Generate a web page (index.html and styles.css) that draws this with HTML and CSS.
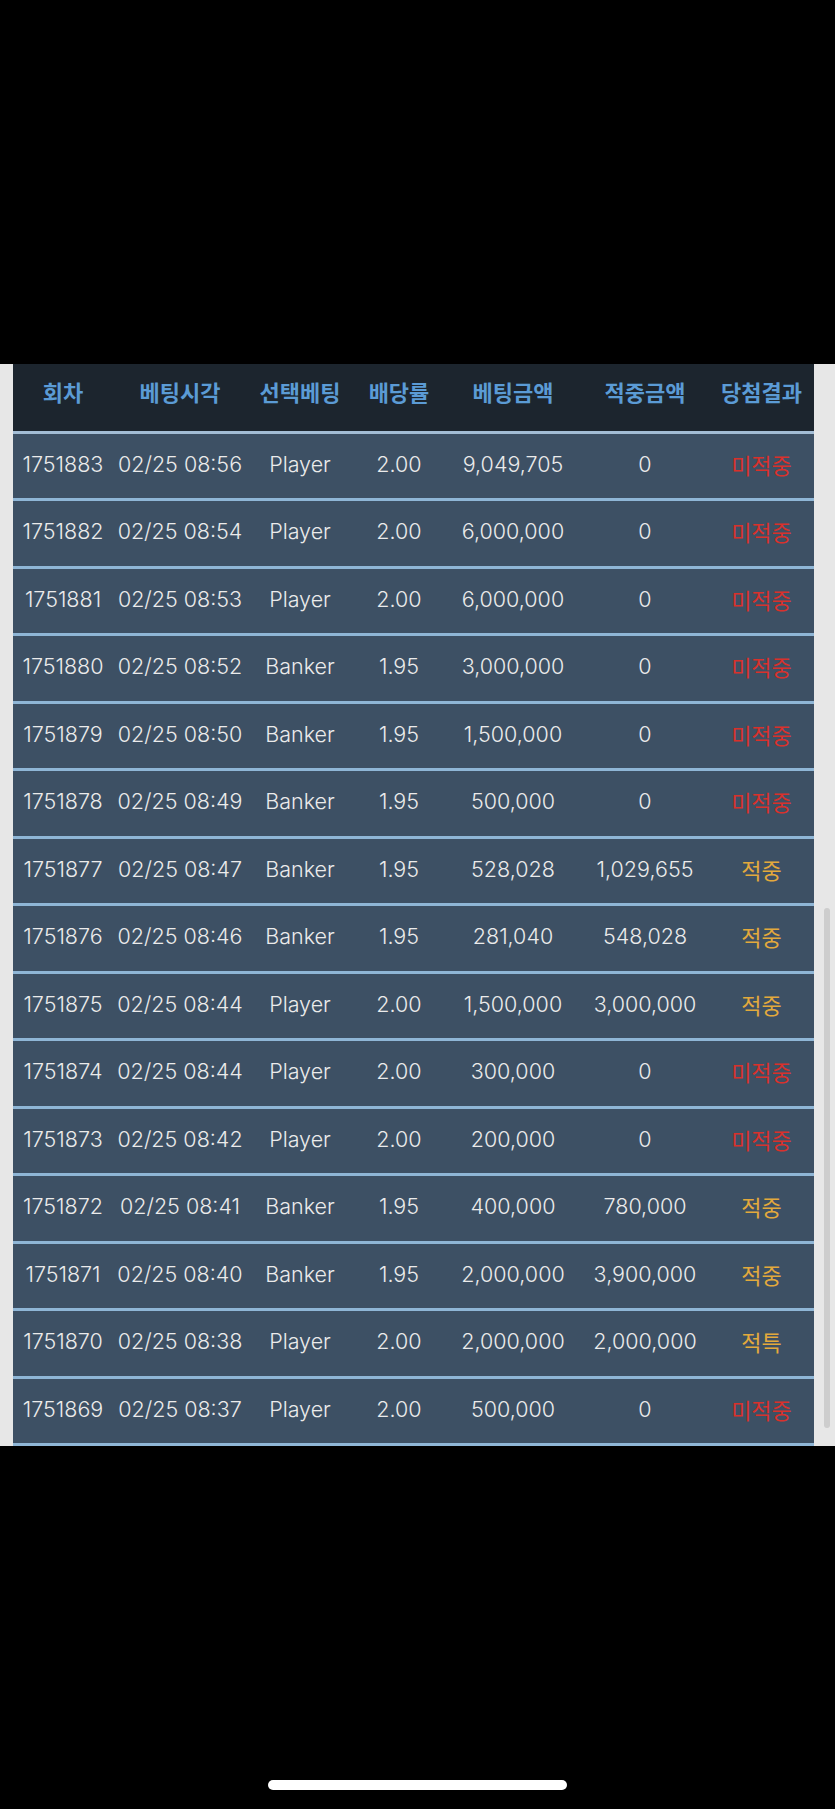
FILE: index.html
```html
<!DOCTYPE html>
<html lang="ko">
<head>
    <meta charset="UTF-8">
    <meta name="viewport" content="width=device-width, initial-scale=1.0">
    <title>베팅내역</title>
    <link rel="stylesheet" href="styles.css">
</head>
<body>
    <div class="top-bar"></div>

    <div class="screen">
        <div class="side side-left"></div>

        <!-- 베팅 내역 테이블 -->
        <table class="bet-table">
            <colgroup>
                <col class="c-round">
                <col class="c-time">
                <col class="c-pick">
                <col class="c-odds">
                <col class="c-bet">
                <col class="c-win">
                <col class="c-result">
            </colgroup>
            <thead>
                <tr>
                    <th>회차</th>
                    <th>베팅시각</th>
                    <th>선택베팅</th>
                    <th>배당률</th>
                    <th>베팅금액</th>
                    <th>적중금액</th>
                    <th>당첨결과</th>
                </tr>
            </thead>
            <tbody>
                <tr><td>1751883</td><td>02/25 08:56</td><td>Player</td><td>2.00</td><td>9,049,705</td><td>0</td><td class="lose">미적중</td></tr>
                <tr><td>1751882</td><td>02/25 08:54</td><td>Player</td><td>2.00</td><td>6,000,000</td><td>0</td><td class="lose">미적중</td></tr>
                <tr><td>1751881</td><td>02/25 08:53</td><td>Player</td><td>2.00</td><td>6,000,000</td><td>0</td><td class="lose">미적중</td></tr>
                <tr><td>1751880</td><td>02/25 08:52</td><td>Banker</td><td>1.95</td><td>3,000,000</td><td>0</td><td class="lose">미적중</td></tr>
                <tr><td>1751879</td><td>02/25 08:50</td><td>Banker</td><td>1.95</td><td>1,500,000</td><td>0</td><td class="lose">미적중</td></tr>
                <tr><td>1751878</td><td>02/25 08:49</td><td>Banker</td><td>1.95</td><td>500,000</td><td>0</td><td class="lose">미적중</td></tr>
                <tr><td>1751877</td><td>02/25 08:47</td><td>Banker</td><td>1.95</td><td>528,028</td><td>1,029,655</td><td class="win">적중</td></tr>
                <tr><td>1751876</td><td>02/25 08:46</td><td>Banker</td><td>1.95</td><td>281,040</td><td>548,028</td><td class="win">적중</td></tr>
                <tr><td>1751875</td><td>02/25 08:44</td><td>Player</td><td>2.00</td><td>1,500,000</td><td>3,000,000</td><td class="win">적중</td></tr>
                <tr><td>1751874</td><td>02/25 08:44</td><td>Player</td><td>2.00</td><td>300,000</td><td>0</td><td class="lose">미적중</td></tr>
                <tr><td>1751873</td><td>02/25 08:42</td><td>Player</td><td>2.00</td><td>200,000</td><td>0</td><td class="lose">미적중</td></tr>
                <tr><td>1751872</td><td>02/25 08:41</td><td>Banker</td><td>1.95</td><td>400,000</td><td>780,000</td><td class="win">적중</td></tr>
                <tr><td>1751871</td><td>02/25 08:40</td><td>Banker</td><td>1.95</td><td>2,000,000</td><td>3,900,000</td><td class="win">적중</td></tr>
                <tr><td>1751870</td><td>02/25 08:38</td><td>Player</td><td>2.00</td><td>2,000,000</td><td>2,000,000</td><td class="win">적특</td></tr>
                <tr><td>1751869</td><td>02/25 08:37</td><td>Player</td><td>2.00</td><td>500,000</td><td>0</td><td class="lose">미적중</td></tr>
            </tbody>
        </table>

        <div class="side side-right">
            <div class="scroll-thumb"></div>
        </div>
    </div>

    <div class="bottom-bar">
        <div class="home-indicator"></div>
    </div>
</body>
</html>
```

FILE: styles.css
```css
html, body {
    margin: 0;
    padding: 0;
    background-color: #000000;
}

body {
    font-family: Inter, "Noto Sans CJK KR", sans-serif;
    width: 835px;
    height: 1809px;
    overflow: hidden;
}

.top-bar {
    height: 364px;
}

.screen {
    display: flex;
    height: 1082px;
}

.side {
    background-color: #e7e7e7;
}

.side-left {
    width: 13px;
}

.side-right {
    width: 21px;
    display: flex;
    justify-content: center;
    padding-left: 4px;
    box-sizing: border-box;
}

.scroll-thumb {
    width: 6px;
    height: 520px;
    margin-top: 544px;
    border-radius: 3px;
    background-color: #cdcdcd;
}

.bet-table {
    width: 801px;
    table-layout: fixed;
    border-collapse: collapse;
    border-spacing: 0;
    font-size: 21.5px;
    background-color: #3d5064;
    color: #ebebeb;
}

.c-round { width: 100px; }
.c-time { width: 134px; }
.c-pick { width: 106px; }
.c-odds { width: 92px; }
.c-bet { width: 136px; }
.c-win { width: 128px; }
.c-result { width: 105px; }

.bet-table th {
    height: 68px;
    padding: 0 0 12px;
    box-sizing: border-box;
    background-color: #1c252e;
    color: #5b9bd5;
    font-family: "Noto Sans CJK KR", sans-serif;
    font-weight: 700;
    font-size: 22px;
    text-align: center;
    white-space: nowrap;
    border-bottom: 3px solid #a3bdd5;
}

.bet-table td {
    height: 64.4px;
    padding: 0 0 4px;
    box-sizing: border-box;
    text-align: center;
    white-space: nowrap;
    font-weight: 300;
    border-bottom: 3px solid #8fb6d6;
}

.bet-table td.lose {
    color: #d8312c;
    font-family: "Noto Sans CJK KR", sans-serif;
    font-weight: 400;
    font-size: 22px;
}

.bet-table td.win {
    color: #e3a93c;
    font-family: "Noto Sans CJK KR", sans-serif;
    font-weight: 400;
    font-size: 22px;
}

.bottom-bar {
    height: 363px;
    display: flex;
    justify-content: center;
}

.home-indicator {
    width: 299px;
    height: 10px;
    margin-top: 334px;
    border-radius: 5px;
    background-color: #ffffff;
}
```
